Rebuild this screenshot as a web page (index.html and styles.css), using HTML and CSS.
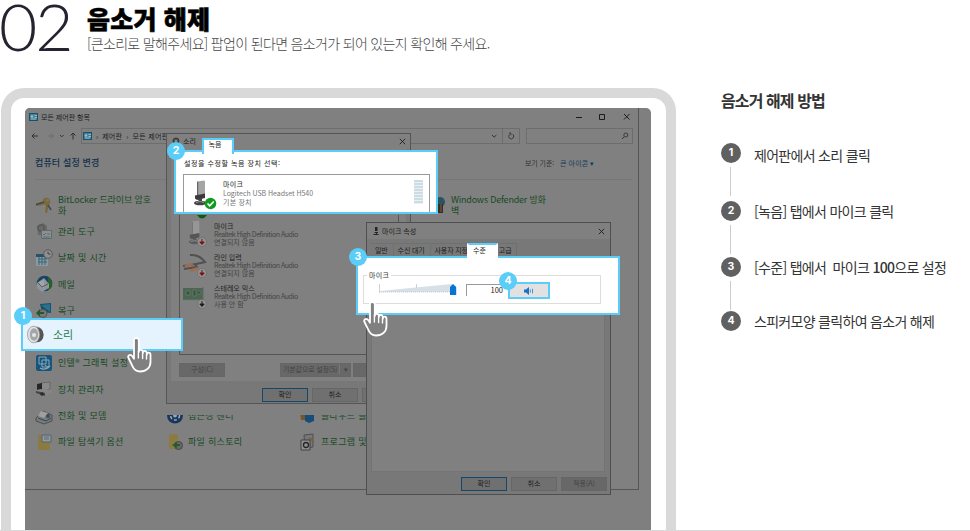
FILE: index.html
```html
<!DOCTYPE html>
<html lang="ko">
<head>
<meta charset="utf-8">
<title>음소거 해제</title>
<link rel="stylesheet" href="styles.css">
</head>
<body>
<svg class="defs" aria-hidden="true">
  <defs>
    <symbol id="hand" viewBox="0 0 26 37">
      <path d="M9 2.2c-1.3 0-2 .9-2 2v18.6l-1.7-2.6c-.8-1.2-2.2-1.6-3.2-1-.9.6-1.1 1.700-.6 2.800l4.200 8.600c1.500 3.200 3.800 4.900 7.300 4.900 6.200 0 10.500-3.900 10.500-9.600v-7.200c0-1.300-.9-2-1.900-2s-1.800.8-1.800 2v-1.600c0-1.300-.9-2.100-2-2.100s-2 .8-2 2.100v-1.200c0-1.300-.9-2.100-2-2.100s-2 .8-2 2.100V4.200c0-1.100-.8-2-2.800-2z" fill="#808080" stroke="#fff" stroke-width="1.800" stroke-linejoin="round"/>
      <path d="M11.400 15v7M15.600 17v5.500M19.500 18.500v4.500" fill="none" stroke="#fff" stroke-width="1.400" stroke-linecap="round"/>
    </symbol>
    <symbol id="panel" viewBox="0 0 9 8"><path d="M0 0h9v8H0z" fill="#17526b"/><path d="M1 1h7v6H1z" fill="#3f7f98"/><circle cx="3" cy="3.500" r="1.300" fill="#a9b8bd"/><path d="M5.500 2.500H8M5.500 4.500H8M2 6h5" stroke="#b5c4c8" stroke-width=".8"/></symbol>
    <symbol id="close" viewBox="0 0 7 7"><path d="M.8.8l5.400 5.400M6.200.8L.8 6.200" stroke="#1c1c1c" stroke-width=".9"/></symbol>
    <symbol id="mic" viewBox="0 0 20 26"><path d="M6 1.500l7-1 1 .8V14l-8 1.500z" fill="#a5a5a5"/><path d="M6 1.500l1.200.5v13l-1.200.5z" fill="#666"/><path d="M4 15.500l10-2v4.500l-8 2-2-1.500z" fill="#3a3a3a"/><path d="M7 19l4-1v4H8z" fill="#444"/><ellipse cx="9" cy="23" rx="6" ry="2.300" fill="#444"/><path d="M5 22.500q4-2 8 0" stroke="#aaa" stroke-width=".8" fill="none"/></symbol>
  </defs>
</svg>

<header class="page-head">
  <div class="num">02</div>
  <div class="head-text">
    <h1>음소거 해제</h1>
    <p>[큰소리로 말해주세요] 팝업이 된다면 음소거가 되어 있는지 확인해 주세요.</p>
  </div>
</header>

<main class="content">
  <div class="device">
    <div class="screen">

      <section class="win control">
        <div class="titlebar">
          <svg class="ic9"><use href="#panel"/></svg><span>모든 제어판 항목</span>
          <svg class="winbtns" viewBox="0 0 56 8"><path d="M1 4.500h6M24.500 1.500h5v5h-5zM49 1l5.500 5.500M54.500 1L49 6.500" fill="none" stroke="#1c1c1c" stroke-width="1"/></svg>
        </div>
        <div class="address">
          <svg class="nav" viewBox="0 0 46 10"><path d="M7 5H1M3.500 2.500L1 5l2.500 2.500" fill="none" stroke="#333"/><path d="M17 5h5.500M20 2.500L22.500 5 20 7.500" fill="none" stroke="#6b6b6b"/><path d="M29 4l1.800 1.800L32.600 4" fill="none" stroke="#333"/><path d="M42 8.500V2M39.500 4.500L42 2l2.500 2.500" fill="none" stroke="#333"/></svg>
          <div class="path"><svg class="ic9"><use href="#panel"/></svg><i>›</i><span>제어판</span><i>›</i><span>모든 제어판 항목</span>
            <svg class="pathend" viewBox="0 0 30 15"><path d="M3 6l2.200 2.200L7.400 6" fill="none" stroke="#333"/><path d="M13.500 0v15" stroke="#6d6d6d"/><path d="M20.500 5.500a2.500 2.500 0 1 0 3.200-.2M20 4h1.800v2.300" fill="none" stroke="#333" stroke-width=".9"/></svg>
          </div>
          <div class="search"><svg viewBox="0 0 8 8"><circle cx="4.800" cy="3" r="2" fill="none" stroke="#333" stroke-width=".9"/><path d="M3.300 4.500L1 7" stroke="#333"/></svg></div>
        </div>
        <div class="subhead"><b>컴퓨터 설정 변경</b><span class="by">보기 기준:</span><span class="size">큰 아이콘 ▾</span></div>
        <div class="items">
          <div class="item c1 r1"><svg viewBox="0 0 18 18"><circle cx="11.500" cy="5.500" r="3.800" fill="#7c6a35"/><circle cx="12.500" cy="4.200" r="1.200" fill="#777"/><path d="M11 9l-1 7 2 1.500L13.500 9zM8 6L1 8v2l7-1z" fill="#77683c"/><path d="M1 8.500l8-2.500M13 9l3 5" stroke="#474747" stroke-width="1.500"/></svg><span>BitLocker 드라이브 암호<br>화</span></div>
          <div class="item c1 r2"><svg viewBox="0 0 18 18"><path d="M2 4l6-3 4 3v9H3z" fill="#696969"/><circle cx="6" cy="6" r="3.200" fill="none" stroke="#555" stroke-width="1.200"/><path d="M6.500 8.500h10v8h-10z" fill="#8d8f90" stroke="#5d6a70"/><path d="M8 12l1 1 2-2M12 12h3M8 15h7" fill="none" stroke="#4b626d" stroke-width=".8"/></svg><span>관리 도구</span></div>
          <div class="item c1 r3"><svg viewBox="0 0 18 18"><path d="M1 5h12v12H1z" fill="#8b989d"/><path d="M1 5h12v3H1z" fill="#275269"/><path d="M3 10h9M3 13h9M4 8v8M7 8v8M10 8v8" stroke="#38687e"/><circle cx="13" cy="5" r="4.300" fill="#8f8f8f" stroke="#595959"/><path d="M13 2.500V5h2.500" fill="none" stroke="#444"/></svg><span>날짜 및 시간</span></div>
          <div class="item c1 r4"><svg viewBox="0 0 18 18"><circle cx="9.500" cy="8.500" r="7.800" fill="#174461"/><path d="M13 2q5 4 4 10l-4 3z" fill="#27622b"/><path d="M2 8l7-5 5 6v4l-7 4-5-4z" fill="#8e959b"/><path d="M4 7l5-2v8l-4-2z" fill="#a4a4a4"/><path d="M3 8l4 4 6-3" fill="none" stroke="#4f5d6b"/></svg><span>메일</span></div>
          <div class="item c1 r5"><svg viewBox="0 0 18 18"><path d="M5 3l11-1v10l-9-1z" fill="#17516f"/><path d="M6 4l9-1v8z" fill="#29718f"/><circle cx="8" cy="12.500" r="4" fill="#777" stroke="#555"/><path d="M1 12l4-4v3h4v2H5v3z" fill="#26562b"/></svg><span>복구</span></div>
          <div class="item c1 r7"><svg viewBox="0 0 18 18"><rect x="1" y="1" width="16" height="16" rx="2" fill="#17557d"/><path d="M4 3h7v7H4zM7 6h7v7H7zM10 11l4 3" fill="none" stroke="#8aa6b4"/><path d="M5 14q5 3 10-2" fill="none" stroke="#93aab4" stroke-width="1.300"/></svg><span>인텔® 그래픽 설정</span></div>
          <div class="item c1 r8"><svg viewBox="0 0 18 18"><path d="M6 3l9-1v7l-8 2z" fill="#8a8a8a" stroke="#555" stroke-width=".6"/><path d="M2 4l5-1v6l-5 1z" fill="#262626"/><path d="M1 10l8-1 8 1v3l-7 3-9-3z" fill="#858585"/><path d="M1 11l9 2v3l-9-3z" fill="#464646"/><circle cx="7" cy="14" r="1.800" fill="#292929"/></svg><span>장치 관리자</span></div>
          <div class="item c1 r9"><svg viewBox="0 0 18 18"><path d="M1 11l7-7 9 4v6l-8 3-8-3z" fill="#747b7e" stroke="#444" stroke-width=".8"/><path d="M6 4l7 2-4 5-6-2z" fill="#a0a0a0"/><path d="M3 11l8 3 5-3" fill="none" stroke="#444"/><circle cx="13" cy="9" r="2" fill="#315064"/></svg><span>전화 및 모뎀</span></div>
          <div class="item c1 r10"><svg viewBox="0 0 18 18"><path d="M3 2h10l2 2v13H3z" fill="#8b7b42"/><path d="M7 2h9v7H7z" fill="#989898" stroke="#4c6576"/><path d="M9 4h5M9 6h5" stroke="#596d7a"/></svg><span>파일 탐색기 옵션</span></div>
          <div class="item c2 r9"><svg viewBox="0 0 18 18"><circle cx="9" cy="8.500" r="8" fill="#16385f"/><circle cx="9" cy="8.500" r="4.500" fill="none" stroke="#aaa" stroke-width="1.500" stroke-dasharray="3 2"/><circle cx="9" cy="8.500" r="2" fill="#9ba6ae"/></svg><span>접근성 센터</span></div>
          <div class="item c2 r10"><svg viewBox="0 0 18 18"><path d="M3 1h8l1 2v13H3z" fill="#8b7b42"/><circle cx="12.500" cy="12.500" r="4" fill="#686868" stroke="#454545"/><path d="M6 12l5-3v2h3v2h-3v2z" fill="#235d2c"/></svg><span>파일 히스토리</span></div>
          <div class="item c3 r9"><svg viewBox="0 0 18 18"><path d="M1 4h6v9H2z" fill="#74572b"/><path d="M6 5l6-2 3 2v9l-5 2-4-2z" fill="#164d79"/></svg><span>클라우드 폴더</span></div>
          <div class="item c3 r10"><svg viewBox="0 0 18 18"><path d="M5 2l9-1v13l-8 2z" fill="#777" stroke="#444" stroke-width=".8"/><path d="M2 7h9v10H2z" fill="#919191" stroke="#404040"/><circle cx="7" cy="12" r="2.500" fill="none" stroke="#252525" stroke-width="1.300"/><path d="M10 5l3 2" stroke="#805c28" stroke-width="2"/></svg><span>프로그램 및 기능</span></div>
          <div class="item c4 r1"><svg viewBox="0 0 18 18"><circle cx="8" cy="6" r="5" fill="#285362"/><path d="M2 8h9v9H4z" fill="#3a2c20"/><path d="M5 8v8M9 8v8" stroke="#786444"/></svg><span>Windows Defender 방화<br>벽</span></div>
        </div>
      </section>

      <section class="win sound">
        <div class="dlg-title"><svg viewBox="0 0 8 8"><circle cx="4" cy="4" r="3" fill="#555" stroke="#333"/><circle cx="4" cy="4" r="1" fill="#999"/></svg><span>소리</span><svg class="x"><use href="#close"/></svg></div>
        <div class="dlg-body">
          <div class="devlist">
            <svg class="peek" viewBox="0 0 10 4"><path d="M0 0h10q-5 7-10 0z" fill="#0c5a14"/></svg>
            <div class="dev"><svg class="mini" viewBox="0 0 26 28"><use href="#mic" x="4" y="0" width="19" height="25" opacity=".6"/><circle cx="20" cy="22" r="4.500" fill="#939393" stroke="#606060" stroke-width=".5"/><path d="M20 19v5M17.800 22l2.200 2.500 2.200-2.500z" stroke="#7b1010" fill="#7b1010"/></svg><div><b>마이크</b><span>Realtek High Definition Audio</span><span class="ko">연결되지 않음</span></div></div>
            <div class="dev"><svg class="mini" viewBox="0 0 26 28"><path d="M8 4q9-1 15 7l-9 2M1 15l12-2 2 3-13 2" fill="none" stroke="#505050" stroke-width="2"/><path d="M3 15l8-2M8 20l8-3" stroke="#a36c4c" stroke-width="2.500"/><circle cx="20" cy="22" r="4.500" fill="#939393" stroke="#606060" stroke-width=".5"/><path d="M20 19v5M17.800 22l2.200 2.500 2.200-2.500z" stroke="#7b1010" fill="#7b1010"/></svg><div><b>라인 입력</b><span>Realtek High Definition Audio</span><span class="ko">연결되지 않음</span></div></div>
            <div class="dev"><svg class="mini" viewBox="0 0 26 28"><path d="M1 6h20v12H1z" fill="#4c6652"/><path d="M4 9h4v4H4zM11 8h3v6h-3zM16 9h3v3h-3M2 18h17" stroke="#6c8072" stroke-width=".7" fill="#38533f"/><path d="M21 5v14" stroke="#666"/><circle cx="20" cy="22" r="4.500" fill="#939393" stroke="#606060" stroke-width=".5"/><path d="M20 19v5M17.800 22l2.200 2.500 2.200-2.500z" stroke="#1c1c1c" fill="#1c1c1c"/></svg><div><b>스테레오 믹스</b><span>Realtek High Definition Audio</span><span class="ko">사용 안 함</span></div></div>
          </div>
          <div class="row"><span class="btn off">구성(C)</span><span class="btn off wide">기본값으로 설정(S) <em>▾</em></span><span class="btn off"></span></div>
        </div>
        <div class="dlg-foot"><span class="btn primary">확인</span><span class="btn">취소</span><span class="btn"></span></div>
      </section>

      <section class="win props">
        <div class="dlg-title"><svg viewBox="0 0 8 8"><path d="M3 0h2.500v4H3zM2.500 5h3.500v1H5v1h1.500v1h-5V7H4V6H2.500z" fill="#242424"/></svg><span>마이크 속성</span><svg class="x"><use href="#close"/></svg></div>
        <div class="tabs"><span>일반</span><span>수신 대기</span><span>사용자 지정</span><span class="gap"></span><span>고급</span></div>
        <div class="props-body"></div>
        <div class="dlg-foot"><span class="btn primary">확인</span><span class="btn">취소</span><span class="btn off">적용(A)</span></div>
      </section>

      <section class="spot spot1">
        <svg viewBox="0 0 17 19"><ellipse cx="9" cy="9.500" rx="7.500" ry="8" fill="#8b8b8b"/><ellipse cx="11" cy="10" rx="5.500" ry="7" fill="#555"/><ellipse cx="6.500" cy="9.500" rx="6" ry="8.300" fill="#e2e2e2" stroke="#999" stroke-width=".8"/><ellipse cx="7" cy="9.500" rx="4.200" ry="6.200" fill="#a3a7a9"/><circle cx="7" cy="10" r="2" fill="#e6e6e6"/></svg>
        <span>소리</span><b class="badge">1</b>
      </section>

      <section class="spot spot2">
        <div class="spot-tab">녹음</div>
        <p>설정을 수정할 녹음 장치 선택:</p>
        <div class="micbox">
          <svg class="micicon" viewBox="0 0 23 30"><use href="#mic" x="-3" y="0" width="20" height="26"/><circle cx="16.500" cy="23.500" r="5.800" fill="#119a20"/><path d="M13.500 23.500l2.200 2.300 4-4.300" fill="none" stroke="#fff" stroke-width="1.600"/></svg>
          <div class="mictext"><b>마이크</b><span>Logitech USB Headset H540</span><span class="ko">기본 장치</span></div>
          <div class="meter"></div>
        </div>
        <b class="badge">2</b>
      </section>

      <section class="spot spot3">
        <div class="spot-tab">수준</div>
        <div class="level">
          <span class="legend">마이크</span>
          <svg class="slider" viewBox="0 0 80 16"><path d="M2 9L74 2v8H2z" fill="#d7e0e7"/><path d="M1 10h75" stroke="#c8c8c8" stroke-dasharray="1 1"/><path d="M1.500 2v9M38.500 2v4" stroke="#d0d0d0"/><path d="M72 5l3-3 3.200 3v8H72z" fill="#0874d1"/></svg>
          <span class="value">100</span>
          <div class="speaker"><svg viewBox="0 0 10 8"><path d="M0 2.500h2L5 0v8L2 5.500H0z" fill="#1673c5"/><path d="M6.300 2.500v3M8.500 1.800v4.500" stroke="#4993cc"/></svg><b class="badge">4</b></div>
        </div>
        <b class="badge">3</b>
      </section>

      <svg class="hand hand1"><use href="#hand"/></svg>
      <svg class="hand hand2"><use href="#hand"/></svg>
    </div>
  </div>

  <aside class="guide">
    <h2>음소거 해제 방법</h2>
    <ol>
      <li><b>1</b><span>제어판에서 소리 클릭</span></li>
      <li><b>2</b><span>[녹음] 탭에서 마이크 클릭</span></li>
      <li><b>3</b><span>[수준] 탭에서&nbsp; 마이크 <em>100</em>으로 설정</span></li>
      <li><b>4</b><span>스피커모양 클릭하여 음소거 해제</span></li>
    </ol>
  </aside>
</main>
</body>
</html>
```
FILE: styles.css
```css
* { box-sizing: border-box; }
body {
  margin: 0;
  width: 970px;
  height: 531px;
  overflow: hidden;
  display: flex;
  flex-direction: column;
  background: #fff;
  border-bottom: 1px solid #d9d9d9;
  font-family: "Noto Sans CJK KR", sans-serif;
}
h1, h2, p, ol { margin: 0; padding: 0; }
i, em { font-style: normal; }
svg { display: block; flex: none; }
.defs { position: absolute; width: 0; height: 0; }

.page-head { display: flex; height: 88px; flex: none; }
.num {
  width: 84px;
  font: 300 66px/52px Lato, sans-serif;
  letter-spacing: -2px;
  text-indent: -1px;
  color: #25232f;
}
.head-text { padding: 4px 0 0 3px; }
h1 { font-size: 25px; line-height: 28px; font-weight: 900; letter-spacing: .2px; color: #000; -webkit-text-stroke: .6px #000; }
.head-text p { font-size: 14px; line-height: 22px; font-weight: 300; letter-spacing: -.67px; color: #444; }

.content { display: flex; flex: 1; min-height: 0; }
.device {
  width: 675px;
  margin-left: 1px;
  flex: none;
  border: 10px solid #d9d9d9;
  border-bottom: 0;
  border-radius: 23px 23px 0 0;
  padding: 10px 15px 0 14px;
}
.screen {
  position: relative;
  height: 422px;
  background: #7f7f7f;
  border-radius: 5px 5px 0 0;
  font-size: 7px;
  color: #1c1c1c;
}
.win { position: absolute; display: flex; flex-direction: column; overflow: hidden; }

.control {
  left: 0; top: 0; width: 614px; height: 382px;
  background: #808080;
  border: solid #555;
  border-width: 0 1px 1px 0;
  border-radius: 5px 0 0 0;
}
.titlebar { display: flex; align-items: center; height: 18px; padding: 0 7px 0 4px; gap: 3px; }
.ic9 { width: 9px; height: 8px; }
.winbtns { width: 56px; height: 8px; margin-left: auto; }
.address { display: flex; align-items: center; height: 20px; padding: 0 5px 0 6px; }
.nav { width: 46px; height: 10px; margin-right: 4px; }
.path { display: flex; align-items: center; gap: 4px; width: 440px; height: 16px; border: 1px solid #6d6d6d; padding-left: 1px; }
.path span { letter-spacing: .3px; }
.pathend { width: 30px; height: 15px; margin-left: auto; }
.search { display: flex; align-items: center; justify-content: flex-end; width: 107px; height: 16px; margin-left: 6px; border: 1px solid #6d6d6d; padding-right: 3px; }
.search svg { width: 8px; height: 8px; }
.subhead { display: flex; align-items: center; height: 34px; margin: 0 6px 0 10px; border-bottom: 1px solid #777; }
.subhead b { font-size: 9px; font-weight: 500; color: #12304c; width: 490px; letter-spacing: .15px; }
.by { width: 35px; color: #333; letter-spacing: -.1px; }
.size { color: #123d59; letter-spacing: .1px; }
.items { display: grid; grid-template-columns: 131px 133px 133px 150px; grid-template-rows: repeat(10, 26.3px); padding: 12px 0 0 10px; }
.item { display: flex; align-items: center; gap: 5px; font-size: 9px; line-height: 11px; color: #164a25; letter-spacing: .3px; }
.item svg { width: 18px; height: 18px; }
.item span { white-space: nowrap; }
.c1 { grid-column: 1; } .c2 { grid-column: 2; } .c3 { grid-column: 3; } .c4 { grid-column: 4; }
.c2, .c3 { gap: 4px; }
.c4 { gap: 1px; }
.r1 { grid-row: 1; line-height: 11.5px; } .r2 { grid-row: 2; } .r3 { grid-row: 3; } .r4 { grid-row: 4; } .r5 { grid-row: 5; }
.c1.r1 { letter-spacing: -.1px; }
.c4.r1 { letter-spacing: -.2px; }
.r7 { grid-row: 7; } .r8 { grid-row: 8; } .r9 { grid-row: 9; } .r10 { grid-row: 10; }

.sound { left: 141px; top: 25px; width: 245px; height: 282px; border-bottom: 11px solid #808080; background: #787878; }
.sound::after { content: ""; position: absolute; inset: 0; border: 1px solid #555; }
.dlg-title { display: flex; align-items: center; gap: 3px; height: 16px; flex: none; padding: 0 5px 0 6px; background: #808080; }
.dlg-title > svg { width: 8px; height: 8px; }
.dlg-title .x { width: 7px; height: 7px; margin-left: auto; }
.dlg-body { height: 232px; margin: 0 5px; padding: 66px 7px 0 8px; background: #808080; }
.devlist { display: flex; flex-direction: column; height: 140px; border: solid #555; border-width: 0 1px 1px; }
.peek { width: 10px; height: 4px; margin: 0 0 1px 17px; }
.dev { display: flex; height: 31px; gap: 6px; line-height: 8.2px; color: #444; }
.dev > div { padding-top: 2px; }
.dev b, .dev span, .mictext b, .mictext span { display: block; }
.dev b { font-weight: 400; color: #1c1c1c; }
.dev span { letter-spacing: -.44px; white-space: nowrap; }
.mictext span { letter-spacing: -.05px; }
.dev .ko { letter-spacing: 0; }
.mictext .ko { letter-spacing: .2px; }
.mini { width: 26px; height: 28px; margin-left: 2px; }
.row, .dlg-foot { display: flex; align-items: center; }
.row { margin-top: 8px; }
.btn { flex: none; width: 46px; height: 14px; border: 1px solid #666; background: #707070; text-align: center; line-height: 11px; }
.btn.off { background: #686868; border-color: #666; color: #444; }
.btn.wide { width: 71px; margin: 0 2px 0 55px; letter-spacing: -.15px; }
.btn.primary { border: 1.5px solid #12496b; }
.btn em { padding-left: 4px; border-left: 1px solid #777; }
.dlg-foot { justify-content: flex-end; gap: 4px; padding: 7px 5px 0 0; }
.sound .dlg-foot { padding-right: 3px; }

.props { left: 341px; top: 114px; width: 245px; height: 273px; border: 1px solid #4f4f4f; background: #787878; }
.props .dlg-title { height: 16px; gap: 2px; padding-left: 5px; }
.tabs { display: flex; align-items: center; height: 18px; flex: none; padding: 4px 0 0 4px; }
.tabs span { height: 14px; padding: 0 5px 0 4px; line-height: 12px; border: solid #707070; border-width: 1px 1px 0 0; white-space: nowrap; letter-spacing: -.15px; }
.tabs .gap { width: 21px; padding: 0; }
.props-body { height: 215px; margin: 0 5px 0 4px; background: #808080; border: 1px solid #747474; }
.props .dlg-foot { padding: 5px 3px 0 0; }

.spot { position: absolute; border: 2px solid #5acdf8; background: #fff; }
.badge {
  position: absolute;
  display: flex; align-items: center; justify-content: center;
  width: 18px; height: 18px;
  border-radius: 50%;
  background: #5acdf8;
  color: #fff;
  font: 700 10.5px/1 Inter, sans-serif;
}
.spot > .badge { left: -9px; top: -10px; }
.spot1 { left: -4px; top: 210px; width: 162px; height: 33px; background: #e5f3ff; display: flex; align-items: center; gap: 9px; padding-left: 4px; font-size: 11px; line-height: 14px; color: #287a43; }
.spot1 span { padding-bottom: 2px; }
.spot1 svg { width: 17px; height: 19px; }
.spot1 > .badge { left: -9px; top: -13px; }
.spot-tab { position: absolute; height: 16px; width: 32px; border: 2px solid #5acdf8; border-bottom: 0; background: #fff; text-align: center; line-height: 8px; }
.spot2 { left: 149px; top: 42px; width: 264px; height: 64px; padding: 5px 6px 0 7px; }
.spot2 .spot-tab { left: 26px; top: -14px; padding-right: 6px; }
.spot2 p { line-height: 12px; padding-left: 1px; letter-spacing: .55px; }
.micbox { display: flex; height: 38px; margin-top: 5px; border: 1px solid #999; border-bottom: 0; padding: 5px 6px 0 10px; }
.micicon { width: 23px; height: 30px; }
.mictext { margin-left: 6px; flex: 1; line-height: 9px; color: #777; }
.mictext b { font-weight: 400; color: #222; letter-spacing: .3px; }
.meter { width: 9px; height: 24px; background: repeating-linear-gradient(#cbdde3 0 2px, #e9f1f4 2px 3px); }
.spot3 { left: 331px; top: 148px; width: 264px; height: 59px; padding: 17px 17px 0 5px; }
.spot3 .spot-tab { left: 109px; top: -15px; width: 31px; padding-right: 6px; line-height: 10px; border-color: #fff; border-top-color: #5acdf8; }
.level { position: relative; display: flex; height: 29px; border: 1px solid #ddd; padding: 6px 0 0 14px; }
.legend { position: absolute; left: 3px; top: -6px; padding: 0 2px; line-height: 10px; background: #fff; color: #333; letter-spacing: .3px; }
.slider { width: 80px; height: 16px; }
.value { width: 40px; height: 12px; margin: 2px 0 0 8px; padding-right: 3px; border: solid #999; border-width: 1px 0 0 1px; text-align: right; line-height: 9px; font-size: 7.5px; }
.speaker { position: relative; width: 42px; height: 17px; margin-left: 2px; border: 2px solid #5acdf8; background: #e1e1e1; display: flex; align-items: center; justify-content: center; }
.speaker svg { width: 10px; height: 8px; }
.speaker .badge { left: -11px; top: -12px; }
.hand { position: absolute; width: 26px; height: 37px; }
.hand1 { left: 102px; top: 228px; }
.hand2 { left: 338px; top: 192px; }

.guide { padding: 1px 0 0 45px; color: #333; }
h2 { font-size: 16px; line-height: 23px; font-weight: 700; letter-spacing: -.9px; margin-bottom: 31px; }
ol { list-style: none; }
li { position: relative; display: flex; align-items: center; gap: 13px; height: 20px; margin-bottom: 38px; }
li:nth-child(2) { margin-bottom: 36px; }
li:nth-child(3) { margin-bottom: 34px; }
li b { display: flex; align-items: center; justify-content: center; width: 20px; height: 20px; border-radius: 50%; background: #606060; color: #fff; font: 700 10.5px/1 Inter, sans-serif; }
li span { font-size: 14px; line-height: 20px; letter-spacing: -.7px; white-space: nowrap; }
li:first-child span { padding-top: 3px; }
li em { font-weight: 500; }
li:not(:last-child)::after { content: ""; position: absolute; left: 9px; top: 24px; width: 1px; height: 29px; background: #ccc; }
```
